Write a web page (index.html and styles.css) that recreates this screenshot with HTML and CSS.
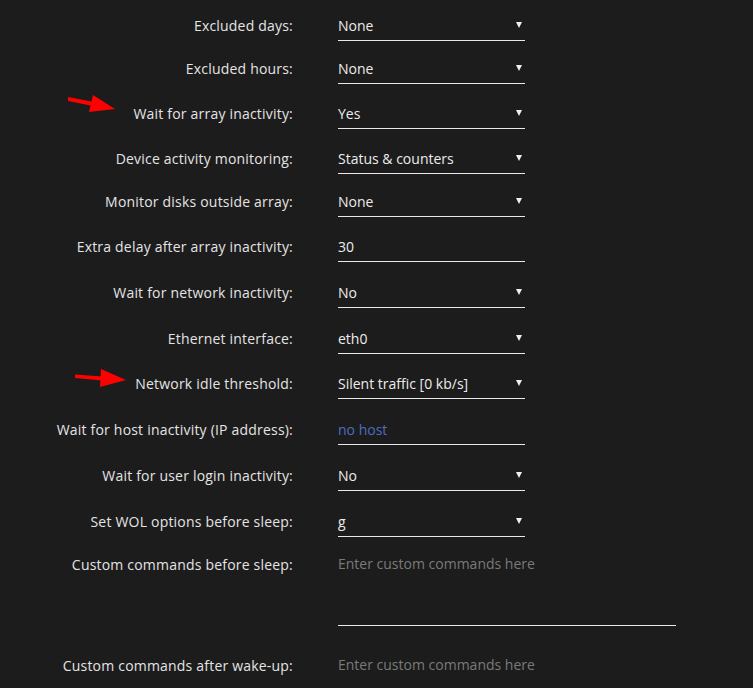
FILE: index.html
```html
<!DOCTYPE html>
<html lang="en">
<head>
  <meta charset="UTF-8" />
  <meta name="viewport" content="width=device-width, initial-scale=1.0"/>
  <title>Sleep settings</title>
  <link rel="stylesheet" href="styles.css">
</head>
<body>
  <div class="settings">
    <div class="row tight">
      <div class="key">Excluded days:</div>
      <div class="field select">None<span class="caret"></span></div>
    </div>
    <div class="row snug">
      <div class="key">Excluded hours:</div>
      <div class="field select">None<span class="caret"></span></div>
    </div>
    <div class="row snug">
      <div class="key">Wait for array inactivity:</div>
      <div class="field select">Yes<span class="caret"></span></div>
    </div>
    <div class="row tight">
      <div class="key">Device activity monitoring:</div>
      <div class="field select">Status &amp; counters<span class="caret"></span></div>
    </div>
    <div class="row snug">
      <div class="key">Monitor disks outside array:</div>
      <div class="field select">None<span class="caret"></span></div>
    </div>
    <div class="row">
      <div class="key">Extra delay after array inactivity:</div>
      <div class="field">30</div>
    </div>
    <div class="row">
      <div class="key">Wait for network inactivity:</div>
      <div class="field select">No<span class="caret"></span></div>
    </div>
    <div class="row snug">
      <div class="key">Ethernet interface:</div>
      <div class="field select">eth0<span class="caret"></span></div>
    </div>
    <div class="row">
      <div class="key">Network idle threshold:</div>
      <div class="field select">Silent traffic [0 kb/s]<span class="caret"></span></div>
    </div>
    <div class="row">
      <div class="key">Wait for host inactivity (IP address):</div>
      <div class="field link">no host</div>
    </div>
    <div class="row">
      <div class="key">Wait for user login inactivity:</div>
      <div class="field select">No<span class="caret"></span></div>
    </div>
    <div class="row">
      <div class="key">Set WOL options before sleep:</div>
      <div class="field select">g<span class="caret"></span></div>
    </div>
    <div class="row area-row">
      <div class="key">Custom commands before sleep:</div>
      <div class="field area placeholder">Enter custom commands here</div>
    </div>
    <div class="row area-row last">
      <div class="key">Custom commands after wake-up:</div>
      <div class="field area placeholder">Enter custom commands here</div>
    </div>

    <!-- red annotation arrows -->
    <svg class="arrow arrow-array" width="50" height="20" viewBox="0 0 50 20">
      <polygon points="0,2 26,7 25,11 0,6" fill="#ff0000"/>
      <polygon points="25,0 21,17 47,14" fill="#ff0000"/>
    </svg>
    <svg class="arrow arrow-net" width="54" height="20" viewBox="0 0 54 20">
      <polygon points="0,5.5 27,7.5 27,11.5 0,9" fill="#ff0000"/>
      <polygon points="26,0 25,18 51,11" fill="#ff0000"/>
    </svg>
  </div>
</body>
</html>
```

FILE: styles.css
```css
body {
  margin: 0;
  background-color: #1c1c1c;
  font-family: "Open Sans", "DejaVu Sans", sans-serif;
  font-size: 14px;
  color: #e6e6e6;
}
.settings {
  position: relative;
  padding-top: 10px;
  height: 678px;
  overflow: hidden;
}
.row {
  display: grid;
  grid-template-columns: 293px auto;
  column-gap: 45px;
  margin-bottom: 15px;
}
.row.snug { margin-bottom: 14px; }
.row.tight { margin-bottom: 12px; }
.key {
  text-align: right;
  padding-top: 6px;
  line-height: 20px;
  letter-spacing: 0.2px;
  color: #e4e4e4;
}
.field {
  position: relative;
  width: 187px;
  padding: 6px 0 4px;
  line-height: 20px;
  border-bottom: 1px solid #e8e8e8;
  color: #ececec;
}
.caret {
  position: absolute;
  right: 3px;
  top: 12px;
  width: 0;
  height: 0;
  border-left: 3px solid transparent;
  border-right: 3px solid transparent;
  border-top: 6px solid #f0f0f0;
}
.link { color: #4a6fc0; }
.area-row { margin-top: -3px; }
.area {
  width: 338px;
  height: 66px;
  padding-top: 5px;
  padding-bottom: 5px;
}
.last { margin-top: 24px; }
.placeholder { color: #7a7a7a; }
.arrow {
  position: absolute;
}
.arrow-array {
  left: 68px;
  top: 95px;
}
.arrow-net {
  left: 75px;
  top: 369px;
}
```
